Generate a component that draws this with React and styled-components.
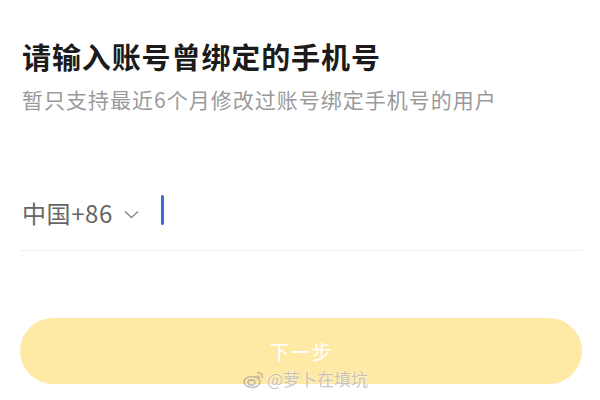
import styled, { createGlobalStyle } from "styled-components";

const GlobalStyle = createGlobalStyle`
    html, body {
        margin: 0;
        padding: 0;
        background: #fff;
    }
    body {
        font-family: "Noto Sans CJK SC", "Noto Sans", sans-serif;
    }
`;

const Page = styled.div`
    position: relative;
    width: 600px;
    height: 400px;
    box-sizing: border-box;
    padding: 0 18px 0 20px;
    overflow: hidden;
`;

const Title = styled.h1`
    margin: 36px 0 0 2px;
    font-size: 29px;
    font-weight: 700;
    line-height: 40px;
    color: #1b1b1b;
    letter-spacing: 0.9px;
`;

const Subtitle = styled.p`
    margin: 9px 0 0 2px;
    font-size: 21px;
    line-height: 28px;
    color: #9a9a9a;
    letter-spacing: 1px;
`;

const InputRow = styled.div`
    display: flex;
    align-items: center;
    height: 76px;
    margin-top: 61px;
    padding-left: 2px;
    border-bottom: 1px solid #efefef;
`;

const Region = styled.button`
    display: flex;
    align-items: center;
    gap: 11px;
    padding: 0;
    border: none;
    background: none;
    font-family: inherit;
    font-size: 24px;
    color: #666;
    letter-spacing: 0.6px;
`;

const Chevron = styled.svg`
    width: 15px;
    height: 9px;
    margin-top: 5px;
`;

const Caret = styled.span`
    display: block;
    width: 3px;
    height: 30px;
    border-radius: 2px;
    background: #4567dd;
    margin-left: 22px;
    margin-top: -4px;
`;

const NextButton = styled.button`
    display: block;
    width: 100%;
    height: 66px;
    margin-top: 67px;
    border: none;
    border-radius: 33px;
    background: #fee9a5;
    color: #fff;
    font-family: inherit;
    font-size: 20px;
    letter-spacing: 1px;
`;

const Watermark = styled.div`
    position: absolute;
    left: 243px;
    top: 366px;
    display: flex;
    align-items: center;
    gap: 2px;
    font-size: 17px;
    color: rgba(150, 150, 150, 0.55);
    text-shadow: 0 0 2px rgba(255, 255, 255, 0.9);
`;

function WeiboLogo() {
    return (
        <svg width="22" height="20" viewBox="0 0 22 20" fill="none" stroke="rgba(150,150,150,0.6)" strokeWidth="1.6">
            <ellipse cx="9" cy="13" rx="8" ry="5.5" />
            <ellipse cx="8.5" cy="13.5" rx="3.5" ry="2.6" />
            <path d="M14 3.5a5 5 0 0 1 5.5 5.5" />
            <path d="M14 7a2 2 0 0 1 2.2 2.2" />
        </svg>
    );
}

function App() {
    return (
        <>
            <GlobalStyle />
            <Page>
                <Title>请输入账号曾绑定的手机号</Title>
                <Subtitle>暂只支持最近6个月修改过账号绑定手机号的用户</Subtitle>
                <InputRow>
                    <Region>
                        中国+86
                        <Chevron viewBox="0 0 15 9" fill="none" stroke="#8a8a8a" strokeWidth="1.5">
                            <path d="M1 1.5l6.5 6 6.5-6" />
                        </Chevron>
                    </Region>
                    <Caret />
                </InputRow>
                <NextButton>下一步</NextButton>
                <Watermark>
                    <WeiboLogo />
                    @萝卜在填坑
                </Watermark>
            </Page>
        </>
    );
}

export default App;
